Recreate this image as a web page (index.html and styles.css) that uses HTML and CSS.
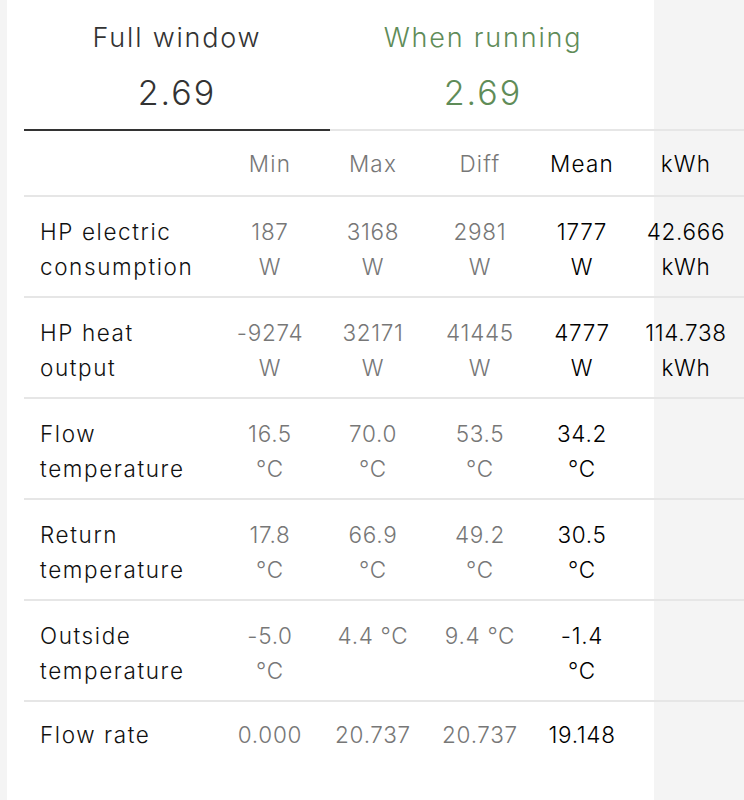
FILE: index.html
```html
<!DOCTYPE html>
<html>
<head>
<meta charset="utf-8">
<link rel="stylesheet" href="styles.css">
</head>
<body>
<div class="panel">
  <div class="content">
    <div class="tabs">
      <div class="tab active">
        <div class="tab-title">Full window</div>
        <div class="tab-value">2.69</div>
      </div>
      <div class="tab running">
        <div class="tab-title">When running</div>
        <div class="tab-value">2.69</div>
      </div>
    </div>
    <table class="stats">
      <colgroup>
        <col class="c-label"><col class="c-min"><col class="c-max"><col class="c-diff"><col class="c-mean"><col class="c-kwh">
      </colgroup>
      <thead>
        <tr>
          <th></th>
          <th class="muted">Min</th>
          <th class="muted">Max</th>
          <th class="muted">Diff</th>
          <th class="strong">Mean</th>
          <th class="strong">kWh</th>
        </tr>
      </thead>
      <tbody>
        <tr>
          <td class="label">HP electric<br>consumption</td>
          <td class="muted"><div>187</div><div>W</div></td>
          <td class="muted"><div>3168</div><div>W</div></td>
          <td class="muted"><div>2981</div><div>W</div></td>
          <td class="strong"><div>1777</div><div>W</div></td>
          <td class="strong"><div>42.666</div><div>kWh</div></td>
        </tr>
        <tr>
          <td class="label">HP heat<br>output</td>
          <td class="muted"><div>-9274</div><div>W</div></td>
          <td class="muted"><div>32171</div><div>W</div></td>
          <td class="muted"><div>41445</div><div>W</div></td>
          <td class="strong"><div>4777</div><div>W</div></td>
          <td class="strong"><div>114.738</div><div>kWh</div></td>
        </tr>
        <tr>
          <td class="label">Flow<br>temperature</td>
          <td class="muted"><div>16.5</div><div>°C</div></td>
          <td class="muted"><div>70.0</div><div>°C</div></td>
          <td class="muted"><div>53.5</div><div>°C</div></td>
          <td class="strong"><div>34.2</div><div>°C</div></td>
          <td></td>
        </tr>
        <tr>
          <td class="label">Return<br>temperature</td>
          <td class="muted"><div>17.8</div><div>°C</div></td>
          <td class="muted"><div>66.9</div><div>°C</div></td>
          <td class="muted"><div>49.2</div><div>°C</div></td>
          <td class="strong"><div>30.5</div><div>°C</div></td>
          <td></td>
        </tr>
        <tr>
          <td class="label">Outside<br>temperature</td>
          <td class="muted"><div>-5.0</div><div>°C</div></td>
          <td class="muted"><div>4.4 °C</div></td>
          <td class="muted"><div>9.4 °C</div></td>
          <td class="strong"><div>-1.4</div><div>°C</div></td>
          <td></td>
        </tr>
        <tr class="last">
          <td class="label">Flow rate</td>
          <td class="muted"><div>0.000</div></td>
          <td class="muted"><div>20.737</div></td>
          <td class="muted"><div>20.737</div></td>
          <td class="strong"><div>19.148</div></td>
          <td></td>
        </tr>
      </tbody>
    </table>
  </div>
</div>
</body>
</html>
```
FILE: styles.css
```css
html, body {
  margin: 0;
  padding: 0;
}
body {
  background: #f4f4f4;
  font-family: Inter, "Open Sans", sans-serif;
  color: #1a1a1a;
  overflow: hidden;
}
.panel {
  margin-left: 7px;
  width: 647px;
  min-height: 800px;
  background: #ffffff;
}
.content {
  margin-left: 17px;
  width: 720px;
}
.tabs {
  display: flex;
  border-bottom: 2px solid #e6e6e6;
}
.tab {
  width: 306px;
  text-align: center;
  padding-top: 20px;
  padding-bottom: 14px;
  color: #333333;
}
.tab.active {
  border-bottom: 2px solid #333333;
  margin-bottom: -2px;
}
.tab.running {
  color: #5f8c58;
}
.tab-title {
  font-size: 27px;
  line-height: 36px;
  letter-spacing: 1.8px;
  font-weight: 300;
}
.tab-value {
  margin-top: 15px;
  font-size: 34px;
  line-height: 44px;
  letter-spacing: 2px;
  font-weight: 300;
}
.stats {
  width: 720px;
  border-collapse: collapse;
  table-layout: fixed;
  font-size: 22.5px;
  letter-spacing: 0.7px;
  font-weight: 300;
}
.c-label { width: 194px; }
.c-min { width: 104px; }
.c-max { width: 102px; }
.c-diff { width: 112px; }
.c-mean { width: 92px; }
.c-kwh { width: 116px; }
.stats th {
  height: 64px;
  padding: 0;
  font-weight: 300;
  text-align: center;
  letter-spacing: 1.2px;
  border-bottom: 2px solid #e6e6e6;
}
.stats td {
  height: 70px;
  padding: 17px 0 12px;
  vertical-align: top;
  text-align: center;
  line-height: 35px;
  border-bottom: 2px solid #e6e6e6;
  white-space: nowrap;
}
.stats tr.last td {
  border-bottom: none;
  padding-top: 15px;
}
.stats td.label {
  text-align: left;
  padding-left: 16px;
  color: #111111;
  letter-spacing: 1.6px;
  font-weight: 350;
}
.muted {
  color: #777777;
}
.stats .strong {
  color: #000000;
  font-weight: 350;
}
```
